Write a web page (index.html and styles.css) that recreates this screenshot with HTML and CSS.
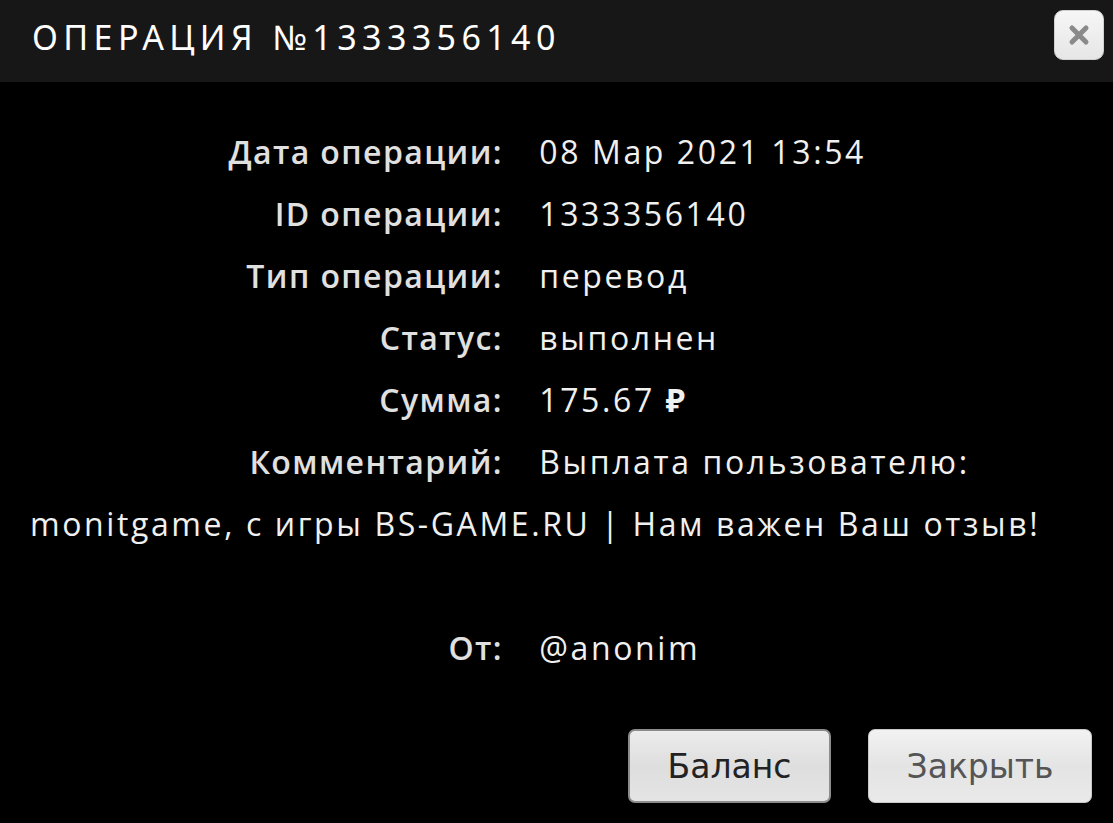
FILE: index.html
```html
<!DOCTYPE html>
<html lang="ru">
<head>
    <meta charset="UTF-8">
    <title>Операция №1333356140</title>
    <link rel="stylesheet" href="styles.css">
</head>
<body>
    <div class="dialog">
        <div class="dialog-header">
            <h1>ОПЕРАЦИЯ №1333356140</h1>
            <button class="close-x" title="Закрыть">
                <svg width="24" height="24" viewBox="0 0 24 24">
                    <path d="M5 5 L19 19 M19 5 L5 19" stroke="#8a8a8a" stroke-width="5" stroke-linecap="round"/>
                </svg>
            </button>
        </div>

        <div class="dialog-body">
            <div class="row"><span class="label">Дата операции:</span> <span class="value">08 Мар 2021 13:54</span></div>
            <div class="row"><span class="label">ID операции:</span> <span class="value">1333356140</span></div>
            <div class="row"><span class="label">Тип операции:</span> <span class="value">перевод</span></div>
            <div class="row"><span class="label">Статус:</span> <span class="value">выполнен</span></div>
            <div class="row"><span class="label">Сумма:</span> <span class="value">175.67 <b>₽</b></span></div>
            <div class="row"><span class="label">Комментарий:</span> <span class="value">Выплата пользователю: monitgame, с игры BS-GAME.RU | Нам важен Ваш отзыв!</span><br>&nbsp;</div>
            <div class="row"><span class="label">От:</span> <span class="value">@anonim</span></div>
        </div>

        <div class="dialog-buttons">
            <button class="btn btn-focus">Баланс</button>
            <button class="btn">Закрыть</button>
        </div>
    </div>
</body>
</html>
```

FILE: styles.css
```css
body {
    margin: 0;
    padding: 0;
    background: #000;
    color: #e6e6e6;
    font-family: "Open Sans", "Noto Sans", sans-serif;
}

.dialog {
    width: 1113px;
    height: 823px;
    background: #000;
}

.dialog-header {
    height: 82px;
    background: #171717;
    display: flex;
    align-items: center;
    justify-content: space-between;
    padding: 0 9px 0 32px;
}

.dialog-header h1 {
    margin: 0;
    color: #fff;
    font-family: "Noto Sans", sans-serif;
    font-weight: 400;
    font-size: 34px;
    letter-spacing: 5.4px;
    margin-top: -9px;
}

.close-x {
    width: 50px;
    height: 50px;
    margin-top: -12px;
    border: 1px solid #d0d0d0;
    border-radius: 9px;
    background: linear-gradient(#f6f6f6, #e6e6e6);
    display: flex;
    align-items: center;
    justify-content: center;
    padding: 0;
}

.dialog-body {
    padding: 0 30px;
    margin-top: 39px;
    font-size: 32px;
    line-height: 62px;
}

.label {
    display: inline-block;
    width: 473px;
    text-align: right;
    font-weight: 600;
    color: #e0e0e0;
    letter-spacing: 1.4px;
    margin-right: 28px;
}

.value {
    font-weight: 400;
    color: #f0f0f0;
    letter-spacing: 2.6px;
}

.value b {
    font-weight: 700;
}

.dialog-buttons {
    display: flex;
    justify-content: flex-end;
    gap: 37px;
    padding-right: 21px;
    margin-top: 50px;
}

.btn {
    height: 74px;
    padding: 0 37px;
    border: 1px solid #c8c8c8;
    border-radius: 7px;
    background: linear-gradient(#f2f2f2, #e4e4e4 50%, #e9e9e9);
    font-family: "DejaVu Sans", sans-serif;
    font-size: 33px;
    color: #555;
}

.btn-focus {
    width: 203px;
    border: 2px solid #8c8c8c;
    color: #222;
    background: linear-gradient(#ececec, #dedede 50%, #e4e4e4);
}

.btn:not(.btn-focus) {
    width: 224px;
}
```
